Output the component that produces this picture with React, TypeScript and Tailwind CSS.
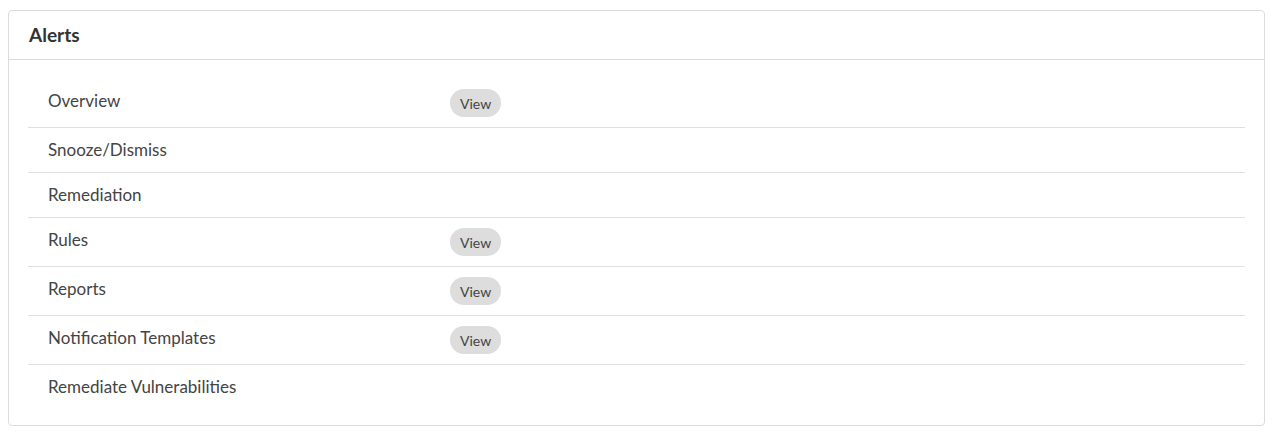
import React from "react";

const rows = [
  { name: "Overview", view: true },
  { name: "Snooze/Dismiss", view: false },
  { name: "Remediation", view: false },
  { name: "Rules", view: true },
  { name: "Reports", view: true },
  { name: "Notification Templates", view: true },
  { name: "Remediate Vulnerabilities", view: false },
];

const App = () => {
  return (
    <div className="min-h-screen bg-white pt-[10px] pl-2 font-['Lato','Liberation_Sans',sans-serif]">
      <div className="w-[1257px] rounded border border-[#dcdcdc] bg-white">
        <div className="flex h-[49px] items-center border-b border-[#dcdcdc] px-5">
          <h1 className="text-[19px] font-bold text-[#333]">Alerts</h1>
        </div>

        <div className="px-[19px] pt-[19px] pb-[16px]">
          {rows.map((row, i) => (
            <div
              key={row.name}
              className={`flex items-start py-[10px] ${
                i < rows.length - 1 ? "border-b border-[#e0e0e0]" : ""
              }`}
            >
              <div className="w-[422px] pl-5 text-[17px] leading-6 text-[#444]">
                {row.name}
              </div>
              {row.view && (
                <button className="h-7 rounded-full bg-[#dcdddc] px-[10px] text-[14px] text-[#444]">
                  View
                </button>
              )}
            </div>
          ))}
        </div>
      </div>
    </div>
  );
};

export default App;
